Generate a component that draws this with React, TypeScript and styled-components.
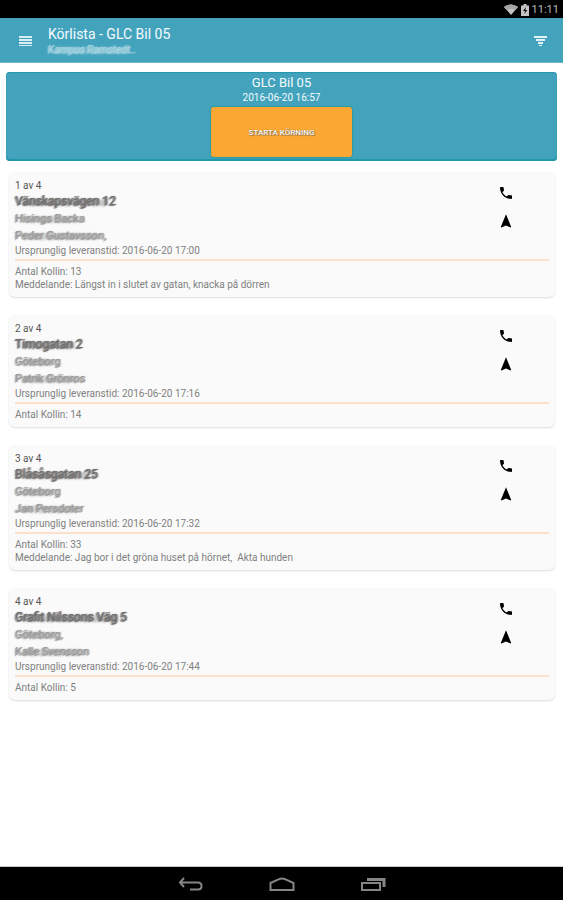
import React from "react";
import styled, { createGlobalStyle } from "styled-components";

const GlobalStyle = createGlobalStyle`
  * { box-sizing: border-box; }
  body { margin: 0; background: #fff; font-family: Roboto, "Liberation Sans", sans-serif; }
  h1, h2, p { margin: 0; font-weight: 400; }
`;

const Screen = styled.div`
  display: flex;
  flex-direction: column;
  min-height: 100vh;
`;

const StatusBar = styled.div`
  display: flex;
  align-items: center;
  justify-content: flex-end;
  gap: 3px;
  height: 18px;
  padding: 1px 4px 0 0;
  background: #000;
  color: #b8b8b8;
  font-size: 11px;
  line-height: 18px;
`;

const AppBar = styled.header`
  display: flex;
  align-items: center;
  height: 45px;
  padding: 2px 14px 0 17px;
  background: #43a3bd;
  border-bottom: 1px solid #6fb6ca;
  color: #f4fbfd;
`;

const Titles = styled.div`
  flex: 1;
  padding-left: 14px;
`;

const Title = styled.h1`
  && { font-size: 14px; line-height: 18px; font-weight: 400; }
`;

const IconButton = styled.button`
  display: flex;
  align-items: center;
  justify-content: center;
  padding: 0;
  border: 0;
  background: none;
  color: inherit;
  cursor: pointer;
`;

const smudgeTones = { light: "#a4d2df", mid: "#9c9c9c", dark: "#707070" };

const Smudged = styled.span<{ $tone: keyof typeof smudgeTones }>`
  position: relative;
  display: inline-block;
  color: ${(p) => smudgeTones[p.$tone]};
  text-shadow: 1px 0 1px currentColor, -1px 1px 1px currentColor;
  &::after {
    content: "";
    position: absolute;
    left: 8px;
    right: 8px;
    top: 50%;
    height: 7px;
    margin-top: -3px;
    border-radius: 3px;
    background: repeating-linear-gradient(20deg, currentColor 0 2px, transparent 2px 3px);
    opacity: 0.6;
    filter: blur(1px);
  }
`;

const Subtitle = styled.p`
  font-size: 10px;
  line-height: 14px;
`;

const Main = styled.main`
  flex: 1;
  padding: 9px 6px 0;
`;

const Hero = styled.section`
  display: flex;
  flex-direction: column;
  align-items: center;
  padding: 3px 0 4px;
  border-radius: 4px;
  background: #43a3bd;
  box-shadow: inset 0 1px 1px #2596ae, inset 0 -2px 1px #2096ac;
  color: #f4fbfd;
`;

const HeroTitle = styled.h2`
  && { font-size: 13px; line-height: 16px; font-weight: 400; }
`;

const HeroTime = styled.p`
  font-size: 10px;
  line-height: 14px;
`;

const StartButton = styled.button`
  width: 141px;
  height: 50px;
  margin-top: 2px;
  border: 0;
  border-radius: 3px;
  background: #fba733;
  box-shadow: 0 0 1px 1px #2f9c9f;
  color: #fff;
  font-family: inherit;
  font-size: 8px;
  font-weight: 500;
  text-shadow: 0 0 1px #75654c, 1px 1px 1px #8a744f;
  cursor: pointer;
`;

const List = styled.div`
  display: flex;
  flex-direction: column;
  gap: 18px;
  padding: 11px 2px 0 3px;
`;

const Card = styled.article`
  padding: 7px 6px 6px;
  border-radius: 6px;
  background: #fafafa;
  box-shadow: 0 1px 2px rgba(0, 0, 0, 0.14);
  color: #808080;
  font-size: 10px;
`;

const CardTop = styled.div`
  display: flex;
  justify-content: space-between;
  padding-bottom: 1px;
  border-bottom: 2px solid #fbe0cb;
`;

const Count = styled.p`
  line-height: 14px;
  color: #555;
`;

const HiddenLine = styled.p<{ $strong?: boolean }>`
  font-size: ${(p) => (p.$strong ? 12 : 11)}px;
  line-height: 17px;
`;

const Delivery = styled.p`
  line-height: 14px;
`;

const Actions = styled.div`
  display: flex;
  flex-direction: column;
  gap: 12px;
  padding: 6px 35px 0 0;
  color: #000;
`;

const Details = styled.div`
  padding-top: 4px;
  line-height: 13px;
  white-space: pre-wrap;
`;

const NavBar = styled.nav`
  display: flex;
  align-items: center;
  justify-content: center;
  gap: 65px;
  height: 33px;
  padding-top: 2px;
  background: #000;
  box-shadow: 0 -1px 0 #c8c8c8;
  color: #858585;
`;

const PhoneIcon = () => (
  <svg width="16" height="16" viewBox="0 0 24 24" fill="currentColor" aria-hidden="true">
    <path d="M6.62 10.79c1.44 2.83 3.76 5.14 6.59 6.59l2.2-2.2c.27-.27.67-.36 1.02-.24 1.12.37 2.33.57 3.57.57.55 0 1 .45 1 1V20c0 .55-.45 1-1 1C10.61 21 3 13.39 3 4c0-.55.45-1 1-1h3.5c.55 0 1 .45 1 1 0 1.25.2 2.45.57 3.57.11.35.03.74-.25 1.02l-2.2 2.2z" />
  </svg>
);

const NavigateIcon = () => (
  <svg width="16" height="16" viewBox="0 0 16 16" fill="currentColor" aria-hidden="true">
    <path d="M8 1.2 2.8 14 3.4 14.4 8 12.4 12.6 14.4 13.2 14Z" />
  </svg>
);

type Stop = {
  address: string;
  city: string;
  person: string;
  time: string;
  parcels: number;
  message?: string;
};

const stops: Stop[] = [
  { address: "Vänskapsvägen 12", city: "Hisings Backa", person: "Peder Gustavsson,", time: "17:00", parcels: 13, message: "Längst in i slutet av gatan, knacka på dörren" },
  { address: "Timogatan 2", city: "Göteborg", person: "Patrik Grönros", time: "17:16", parcels: 14 },
  { address: "Blåsåsgatan 25", city: "Göteborg", person: "Jan Persdoter", time: "17:32", parcels: 33, message: "Jag bor i det gröna huset på hörnet,  Akta hunden" },
  { address: "Grafit Nilssons Väg 5", city: "Göteborg,", person: "Kalle Svensson", time: "17:44", parcels: 5 },
];

const StopCard = ({ stop, index }: { stop: Stop; index: number }) => (
  <Card>
    <CardTop>
      <div>
        <Count>{index + 1} av {stops.length}</Count>
        <HiddenLine $strong><Smudged $tone="dark">{stop.address}</Smudged></HiddenLine>
        <HiddenLine><Smudged $tone="mid">{stop.city}</Smudged></HiddenLine>
        <HiddenLine><Smudged $tone="mid">{stop.person}</Smudged></HiddenLine>
        <Delivery>Ursprunglig leveranstid: 2016-06-20 {stop.time}</Delivery>
      </div>
      <Actions>
        <IconButton aria-label="Ring"><PhoneIcon /></IconButton>
        <IconButton aria-label="Navigera"><NavigateIcon /></IconButton>
      </Actions>
    </CardTop>
    <Details>
      <p>Antal Kollin: {stop.parcels}</p>
      {stop.message && <p>Meddelande: {stop.message}</p>}
    </Details>
  </Card>
);

export default function App() {
  return (
    <Screen>
      <GlobalStyle />
      <StatusBar>
        <svg width="14" height="12" viewBox="0 0 14 12" aria-hidden="true">
          <path d="M0 3Q7-2 14 3L7 11Z" fill="#c4c4c4" />
          <path d="M0 3 2.8 6.2Q7 3.5 11.2 6.2L14 3Q7-2 0 3Z" fill="#a4a4a4" />
        </svg>
        <svg width="8" height="12" viewBox="0 0 8 12" aria-hidden="true">
          <path d="M2.5 0h3v1.5H8V12H0V1.5h2.5Z" fill="#c4c4c4" />
          <path d="M5 3 2 7h2L3.4 10 6.3 6H4.4Z" fill="#111" />
        </svg>
        <span>11:11</span>
      </StatusBar>
      <AppBar>
        <IconButton aria-label="Meny">
          <svg width="17" height="14" viewBox="0 0 17 14" fill="#d9eef3" aria-hidden="true">
            <path d="M2 2h13v2H2zM2 5h13v2H2zM2 8h13v2H2zM2 11h13v1H2z" />
          </svg>
        </IconButton>
        <Titles>
          <Title>Körlista - GLC Bil 05</Title>
          <Subtitle><Smudged $tone="light">Kampus Ramstedt..</Smudged></Subtitle>
        </Titles>
        <IconButton aria-label="Filtrera">
          <svg width="17" height="14" viewBox="0 0 17 14" fill="#e3f2f6" aria-hidden="true">
            <path d="M2 2h13v2H2zM4 5h9v2H4zM6 8h5v2H6zM7 11h3v1H7z" />
          </svg>
        </IconButton>
      </AppBar>
      <Main>
        <Hero>
          <HeroTitle>GLC Bil 05</HeroTitle>
          <HeroTime>2016-06-20 16:57</HeroTime>
          <StartButton>STARTA KÖRNING</StartButton>
        </Hero>
        <List>
          {stops.map((stop, index) => (
            <StopCard key={stop.time} stop={stop} index={index} />
          ))}
        </List>
      </Main>
      <NavBar>
        <IconButton aria-label="Tillbaka">
          <svg width="26" height="16" viewBox="0 0 26 16" fill="none" stroke="currentColor" strokeWidth="2" aria-hidden="true">
            <path d="M6 1 2 5.5 6 10M2 5.5H20Q23.5 5.5 23.5 9T20 12.5H12" />
          </svg>
        </IconButton>
        <IconButton aria-label="Hem">
          <svg width="26" height="16" viewBox="0 0 26 16" fill="none" stroke="currentColor" strokeWidth="2" aria-hidden="true">
            <path d="M1.5 13V6L10 2.2Q13 1 16 2.2L24.5 6V13Z" />
          </svg>
        </IconButton>
        <IconButton aria-label="Senaste appar">
          <svg width="26" height="16" viewBox="0 0 26 16" fill="none" stroke="currentColor" strokeWidth="2" aria-hidden="true">
            <path d="M2 6H20V13H2Z" />
            <path d="M7 2.5H24V10" strokeWidth="3" />
          </svg>
        </IconButton>
      </NavBar>
    </Screen>
  );
}
